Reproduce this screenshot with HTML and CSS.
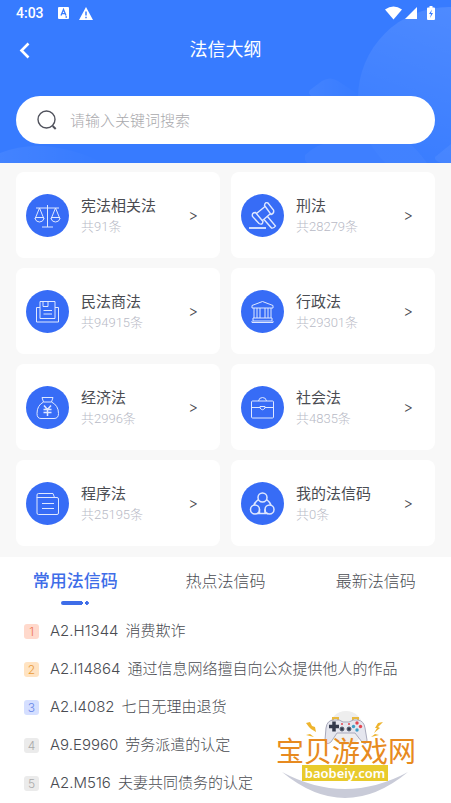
FILE: index.html
```html
<!DOCTYPE html>
<html lang="zh-CN">
<head>
<meta charset="utf-8">
<meta name="viewport" content="width=device-width, initial-scale=1">
<title>法信大纲</title>
<link rel="stylesheet" href="styles.css">
</head>
<body>
<header class="header">
  <svg class="header-art" width="451" height="163" viewBox="0 0 451 163" aria-hidden="true">
    <defs>
      <linearGradient id="orb" x1="0.6" y1="0" x2="0.3" y2="0.8"><stop offset="0" stop-color="#fff" stop-opacity=".12"/><stop offset="1" stop-color="#fff" stop-opacity=".02"/></linearGradient>
      <linearGradient id="fade" x1="0" y1="0" x2="1" y2="0"><stop offset="0" stop-color="#fff" stop-opacity=".06"/><stop offset="1" stop-color="#fff" stop-opacity="0"/></linearGradient>
    </defs>
    <circle cx="449" cy="98" r="91" fill="url(#orb)"/>
    <path d="M310 90 322 81Q330 76 338 81L362 97H313Q307 94 310 90Z" fill="url(#fade)"/>
    <path d="M305 155Q318 143 335 141H405Q415 146 427 163H307Q304 160 305 155Z" fill="#fff" fill-opacity=".035"/>
    <path d="M435 157 451 144V163H442Q434 161 435 157Z" fill="#fff" fill-opacity=".06"/>
    <path d="M0 153Q45 135 104 163H0Z" fill="url(#fade)"/>
  </svg>
  <div class="status">
    <span class="time">4:03</span>
    <svg width="11" height="12" viewBox="0 0 11 12" aria-hidden="true"><rect width="11" height="12" rx="1" fill="#fff"/><path d="M3 8.500 5.500 2.500 8 8.500M4 6.600H7M7.500 10H9" fill="none" stroke="#377bff" stroke-width="1.300"/></svg>
    <svg width="14" height="13" viewBox="0 0 14 13" aria-hidden="true"><path d="M7 0 14 13H0Z" fill="#fff"/><path d="M7 4.500V8.500M7 9.700V11.200" stroke="#377bff" stroke-width="1.500"/></svg>
    <span class="spacer"></span>
    <svg width="17" height="14" viewBox="0 0 17 14" aria-hidden="true"><path d="M0 3.500Q8.500-2.500 17 3.500L8.500 13.500Z" fill="#fff"/></svg>
    <svg width="12" height="12" viewBox="0 0 12 12" aria-hidden="true"><path d="M12 0V12H0Z" fill="#fff"/></svg>
    <svg class="battery" width="8" height="14" viewBox="0 0 8 14" aria-hidden="true"><path d="M2.500 0H5.500V1.500H7Q8 1.500 8 2.500V13Q8 14 7 14H1Q0 14 0 13V2.500Q0 1.500 1 1.500H2.500Z" fill="#fff"/><path d="M5 3.500 2 8H4L3 12 6 7H4Z" fill="#377bff"/></svg>
  </div>
  <div class="nav">
    <button class="back" aria-label="返回"><svg width="11" height="17" viewBox="0 0 11 17"><path d="M9.500 1.500 2.500 8.500 9.500 15.500" fill="none" stroke="#fff" stroke-width="2.600"/></svg></button>
    <h1>法信大纲</h1>
  </div>
  <label class="search">
    <svg width="20" height="20" viewBox="0 0 20 20" aria-hidden="true"><circle cx="9.500" cy="9.500" r="8.500" fill="none" stroke="#50525c" stroke-width="1.400"/><path d="M15.700 16 18.700 19" stroke="#50525c" stroke-width="2"/></svg>
    <input type="search" placeholder="请输入关键词搜索" aria-label="搜索">
  </label>
</header>

<main>
  <nav class="grid" aria-label="法律分类">
    <a class="card" href="#c1">
      <svg class="icon" viewBox="0 0 43 43" aria-hidden="true"><circle cx="21.500" cy="21.500" r="21.500"/><path d="M21.500 11V33M16 33H27M10 14H33M13.500 14 9 25M13.500 14 18 25M29.500 14 25 25M29.500 14 34 25M9 23.500H18M25 23.500H34M9 24.500Q10 28 13.500 28T18 24.500M25 24.500Q26 28 29.500 28T34 24.500"/></svg>
      <span class="info"><span class="name">宪法相关法</span><span class="count">共91条</span></span><span class="arrow">&gt;</span>
    </a>
    <a class="card" href="#c2">
      <svg class="icon" viewBox="0 0 43 43" aria-hidden="true"><circle cx="21.500" cy="21.500" r="21.500"/><path d="M8 34H25" stroke-width="1.800"/><g stroke-width="1.400"><path d="M23.500 11.500Q24 7.500 27 9L32.500 16Q33.500 19.500 30 20.500ZM14.500 18.500 22 27.500Q21.500 31.500 18 29.500L11.500 22.500Q10.500 18.500 14.500 18.500ZM24 12.500 15.500 19.500M29 20 21.500 26.500M23 25.500 30.500 34Q33 34.500 34.500 32L26.500 22.500"/></g></svg>
      <span class="info"><span class="name">刑法</span><span class="count">共28279条</span></span><span class="arrow">&gt;</span>
    </a>
    <a class="card" href="#c3">
      <svg class="icon" viewBox="0 0 43 43" aria-hidden="true"><circle cx="21.500" cy="21.500" r="21.500"/><path d="M14 17.500H10.500V32H32.500V17.500H29M14 28.500V11.500H29V28.500ZM17 11.500V16.500H22V11.500M17.500 20.500H26M17.500 24H26"/></svg>
      <span class="info"><span class="name">民法商法</span><span class="count">共94915条</span></span><span class="arrow">&gt;</span>
    </a>
    <a class="card" href="#c4">
      <svg class="icon" viewBox="0 0 43 43" aria-hidden="true"><circle cx="21.500" cy="21.500" r="21.500"/><path d="M11 18V15.500L21.500 11.500 32 15.500V18ZM13 18V28M16 18V28M19 18V28M24 18V28M27 18V28M30 18V28M12 28H31V31H12ZM11 31V32.500H32V31"/></svg>
      <span class="info"><span class="name">行政法</span><span class="count">共29301条</span></span><span class="arrow">&gt;</span>
    </a>
    <a class="card" href="#c5">
      <svg class="icon" viewBox="0 0 43 43" aria-hidden="true"><circle cx="21.500" cy="21.500" r="21.500"/><path d="M16 11.500H27L25.500 16H17.500ZM17.500 16Q11 19.500 11 27.500 11 32.500 15 32.500H28Q32.500 32.500 32.500 27.500 32.500 19.500 25.500 16"/><path d="M18 19.500 21.500 23.500 25 19.500M17.500 23.500H25.500M17.500 26.500H25.500M21.500 23.500V30" stroke-width="1.500"/></svg>
      <span class="info"><span class="name">经济法</span><span class="count">共2996条</span></span><span class="arrow">&gt;</span>
    </a>
    <a class="card" href="#c6">
      <svg class="icon" viewBox="0 0 43 43" aria-hidden="true"><circle cx="21.500" cy="21.500" r="21.500"/><rect x="10.500" y="15" width="22" height="17" rx="1"/><path d="M17.500 15Q18 11.500 21.500 11.500T25.500 15M10.500 21.500H19M24 21.500H32.500M19 20.500V22Q21.500 25.500 24 22V20.500Z"/></svg>
      <span class="info"><span class="name">社会法</span><span class="count">共4835条</span></span><span class="arrow">&gt;</span>
    </a>
    <a class="card" href="#c7">
      <svg class="icon" viewBox="0 0 43 43" aria-hidden="true"><circle cx="21.500" cy="21.500" r="21.500"/><path d="M11 16V13Q11 11.500 12.500 11.500H27L28.500 15.500M11 15.500H31Q32.500 15.500 32.500 17V31Q32.500 32.500 31 32.500H12.500Q11 32.500 11 31V15.500M16 21.500H28M16 26.500H28"/></svg>
      <span class="info"><span class="name">程序法</span><span class="count">共25195条</span></span><span class="arrow">&gt;</span>
    </a>
    <a class="card" href="#c8">
      <svg class="icon" viewBox="0 0 43 43" aria-hidden="true"><circle cx="21.500" cy="21.500" r="21.500"/><g stroke-width="1.500"><circle cx="21.500" cy="15.500" r="4.500"/><circle cx="14" cy="27.500" r="4.500"/><circle cx="28.500" cy="27.500" r="4.500"/><path d="M17.500 17.500Q14 20 13 23M25.500 17.500Q29 20 30 23M16 31.500H27M18.500 27.500V31.500M24 27.500V31.500"/></g></svg>
      <span class="info"><span class="name">我的法信码</span><span class="count">共0条</span></span><span class="arrow">&gt;</span>
    </a>
  </nav>

  <section class="codes">
    <div class="tabs" role="tablist">
      <button class="tab active" role="tab" aria-selected="true">常用法信码</button>
      <button class="tab" role="tab" aria-selected="false">热点法信码</button>
      <button class="tab" role="tab" aria-selected="false">最新法信码</button>
    </div>
    <ol class="list">
      <li><span class="rank first">1</span><a href="#r1"><span>A2.H1344</span> <span>消费欺诈</span></a></li>
      <li><span class="rank second">2</span><a href="#r2"><span>A2.I14864</span> <span>通过信息网络擅自向公众提供他人的作品</span></a></li>
      <li><span class="rank third">3</span><a href="#r3"><span>A2.I4082</span> <span>七日无理由退货</span></a></li>
      <li><span class="rank">4</span><a href="#r4"><span>A9.E9960</span> <span>劳务派遣的认定</span></a></li>
      <li><span class="rank">5</span><a href="#r5"><span>A2.M516</span> <span>夫妻共同债务的认定</span></a></li>
    </ol>
  </section>
</main>

<aside class="brand">
  <svg width="142" height="92" viewBox="0 0 142 92" role="img" aria-label="宝贝游戏网 baobeiy.com">
    <circle cx="69" cy="17" r="17" fill="#eee"/>
    <path d="M5 61Q68 113 131 61Q68 95 5 61Z" fill="#c9cbd8"/>
    <path d="M56 10V7H61V10M76 10V7H81V10" fill="none" stroke="#e9b93f" stroke-width="2"/>
    <path d="M49 17Q50 9 57 9 63 8 66 11H72Q76 8 81 9 87 10 88 17L90 29Q90 35 85 31L78 22H60L54 31Q49 35 48 29Z" fill="#e5e6ee" stroke="#a9aabc"/>
    <path d="M52 15.500H62M57 10.500V20.500" stroke="#343a4c" stroke-width="3.500"/>
    <g fill="#e34650"><circle cx="80" cy="12" r="1.700"/><circle cx="83.500" cy="15.500" r="1.700"/><circle cx="65" cy="13" r="1"/><circle cx="72" cy="13" r="1"/></g>
    <g fill="#3d9fc6"><circle cx="76.500" cy="15.500" r="1.700"/><circle cx="80" cy="19" r="1.700"/></g>
    <g fill="#343a4c" stroke="#596375"><circle cx="65" cy="18" r="2"/><circle cx="72" cy="18" r="2"/></g>
    <path d="M29 12 33 11 35 15 38 16 39 21 34 18 32 16ZM29 24 33 23 37 26 33 25ZM106 11 101 12 98 17 100 17 97 22 103 17 101 16ZM102 24 98 23 94 26 98 25Z" fill="#eeb42d"/>
    <rect x="25" y="54" width="86" height="16" fill="#e9cb2c"/>
    <text class="brand-name" x="69" y="51" text-anchor="middle">宝贝游戏网</text>
    <text class="brand-url" x="68" y="67" text-anchor="middle">baobeiy.com</text>
  </svg>
</aside>
</body>
</html>
```
FILE: styles.css
```css
* { box-sizing: border-box; }

body {
  position: relative;
  margin: 0;
  min-height: 100vh;
  background: #fff;
  color: #4a4c52;
  font-family: Inter, "Noto Sans CJK SC", sans-serif;
  font-weight: 300;
}

a { color: inherit; text-decoration: none; }
button { padding: 0; border: 0; background: none; font: inherit; color: inherit; }

.header {
  position: relative;
  padding: 0 16px 19px;
  background: #377bff;
  overflow: hidden;
}
.header-art { position: absolute; top: 0; right: 0; }

.status {
  position: relative;
  display: flex;
  align-items: center;
  gap: 4px;
  height: 26px;
  color: #fff;
}
.time { margin-right: 10px; font: 500 14px/26px Roboto, sans-serif; }
.status svg + svg { margin-left: 6px; }
.spacer { flex: 1; }
.spacer + svg + svg { margin-left: -1px; }

.nav {
  position: relative;
  display: grid;
  grid-template-columns: 16px 1fr 16px;
  align-items: center;
  height: 48px;
  margin-bottom: 22px;
  color: #fff;
}
.back { display: flex; padding-left: 3px; }
h1 { margin: 0; font-size: 18px; font-weight: 400; line-height: 26px; text-align: center; }

.search {
  position: relative;
  display: flex;
  align-items: center;
  gap: 13px;
  height: 48px;
  padding: 0 21px;
  border-radius: 24px;
  background: #fff;
}
.search input {
  flex: 1;
  min-width: 0;
  padding: 0;
  border: 0;
  outline: 0;
  background: none;
  font: inherit;
  font-size: 15px;
}
.search input::placeholder { color: #a9a9ad; }

.grid {
  display: grid;
  grid-template-columns: 1fr 1fr;
  gap: 10px 11px;
  padding: 9px 16px 11px;
  background: #f8f8f8;
}
.card {
  display: flex;
  align-items: center;
  gap: 12px;
  height: 86px;
  padding: 0 22px 0 10px;
  border-radius: 8px;
  background: #fff;
}
.icon { flex: none; width: 43px; height: 43px; fill: none; stroke: #dfe8ff; stroke-width: 1; }
.icon > circle { fill: #376cf6; stroke: none; }
.info { flex: 1; display: flex; flex-direction: column; padding-top: 2px; white-space: nowrap; }
.name { font-size: 15px; line-height: 22px; font-weight: 400; }
.count { font-family: Roboto, "Noto Sans CJK SC", sans-serif; font-size: 13px; line-height: 20px; color: #b8bac6; }
.arrow { font-size: 15px; }

.tabs { display: grid; grid-template-columns: repeat(3, 1fr); height: 55px; }
.tab {
  display: flex;
  flex-direction: column;
  align-items: center;
  gap: 7px;
  padding-top: 12px;
  font-size: 16px;
  line-height: 25px;
}
.tab.active { font-size: 17px; font-weight: 500; color: #3e6de8; }
.tab.active::after {
  content: "";
  width: 28px;
  height: 4px;
  border-radius: 2px;
  background:
    radial-gradient(circle at 26px 2px, #3e6de8 2px, transparent 2px),
    radial-gradient(circle at 20px 2px, #3e6de8 2px, transparent 2px),
    linear-gradient(#3e6de8, #3e6de8) 0 0 / 20px 4px no-repeat;
}

.list { margin: 0; padding: 0 24px; list-style: none; }
.list li { display: flex; align-items: center; gap: 11px; height: 38px; font-size: 15px; }
.list a { display: flex; align-items: baseline; gap: 7px; line-height: 22px; white-space: nowrap; }
.rank {
  flex: none;
  width: 15px;
  border-radius: 3px;
  background: #ebebeb;
  color: #aaa;
  font-size: 12px;
  line-height: 15px;
  text-align: center;
}
.rank.first { background: #ffd9cc; color: #ee7753; }
.rank.second { background: #ffe3c2; color: #e99a37; }
.rank.third { background: #d5dfff; color: #6585e8; }

.brand { position: absolute; right: 32px; bottom: 0; height: 92px; }
.brand-name { fill: #e78a20; font: 400 28px "Noto Sans CJK SC", sans-serif; }
.brand-url { fill: #fff; font: 600 13px "Noto Sans", sans-serif; }
```
